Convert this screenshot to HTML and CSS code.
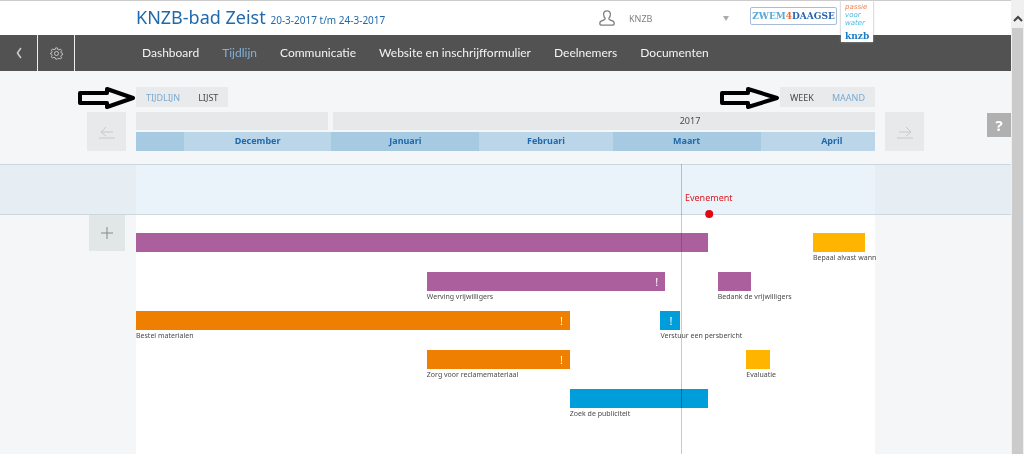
FILE: index.html
```html
<!DOCTYPE html>
<html lang="nl">
<head>
<meta charset="utf-8">
<title>KNZB-bad Zeist - Tijdlijn</title>
<link rel="stylesheet" href="styles.css">
</head>
<body>
<div class="window">
  <div class="app">
    <header class="header">
      <h1 class="title">KNZB-bad Zeist <small class="dates">20-3-2017 t/m 24-3-2017</small></h1>
      <div class="account">
        <svg class="user-icon" viewBox="0 0 16 16" aria-hidden="true"><path d="M8 .8c-2 0-3.400 1.400-3.400 3.500 0 1.700.6 3 1.500 4 .3 1-.1 1.400-1 1.700-2.500.6-4.300 1.500-4.300 3.200 0 1.300.8 2 2.200 2h10c1.400 0 2.200-.7 2.200-2 0-1.700-1.800-2.600-4.300-3.200-.9-.3-1.300-.7-1-1.700.9-1 1.500-2.300 1.500-4C11.400 2.200 10 .8 8 .8z"/></svg>
        <select class="account-select" aria-label="Account"><option>KNZB</option></select>
        <svg class="caret" viewBox="0 0 6 5" aria-hidden="true"><path d="M0 0h6L3 5z"/></svg>
      </div>
      <div class="brands">
        <a class="zwem" href="#"><span class="zwem-light">ZWEM</span><span class="zwem-four">4</span>DAAGSE</a>
        <a class="knzb" href="#"><span class="passie">passie</span><span class="voor">voor</span><span class="voor">water</span><b class="knzb-name">knzb</b></a>
      </div>
    </header>
    <nav class="nav">
      <div class="tools">
        <button class="tool" aria-label="Terug"><svg class="back-icon" viewBox="0 0 6 12"><path d="M5 1Q3 3.500 1.500 6 3 8.500 5 11"/></svg></button>
        <button class="tool" aria-label="Instellingen"><svg class="gear-icon" viewBox="0 0 14 14"><path d="M6 1h2l.4 1.700 1.300.5 1.500-.9 1.400 1.400-.9 1.500.5 1.300 1.300.3v1.600l-1.300.4-.5 1.300.9 1.500-1.400 1.400-1.500-.9-1.300.5L8 13H6l-.4-1.400-1.300-.5-1.500.9-1.400-1.400.9-1.500-.5-1.300L.5 7.400V6.600l1.300-.3.5-1.300-.9-1.500 1.400-1.400 1.500.9 1.300-.5z"/><circle cx="7" cy="7" r="2.200"/></svg></button>
      </div>
      <div class="menu">
        <a href="#">Dashboard</a>
        <a href="#" class="current">Tijdlijn</a>
        <a href="#">Communicatie</a>
        <a href="#">Website en inschrijfformulier</a>
        <a href="#">Deelnemers</a>
        <a href="#">Documenten</a>
      </div>
    </nav>
    <main class="main">
      <div class="switches">
        <div class="switch">
          <svg class="callout callout-view" viewBox="0 0 58 22" aria-hidden="true"><path d="M2 6h27V2l26 9-26 9v-4H2z"/></svg>
          <button class="active">TIJDLIJN</button><button>LIJST</button>
        </div>
        <div class="switch">
          <svg class="callout callout-scale" viewBox="0 0 62 22" aria-hidden="true"><path d="M4 6h26V2l29 9-29 9v-4H4z"/></svg>
          <button>WEEK</button><button class="active">MAAND</button>
        </div>
      </div>
      <div class="calendar">
        <button class="step step-back" aria-label="Vorige"><svg viewBox="0 0 18 14"><path d="M3 7h12M8 2L3 7l5 4M1 13h16"/></svg></button>
        <div class="scale">
          <div class="years"><div class="year year-previous"></div><div class="year year-current">2017</div></div>
          <div class="months days">
            <div class="month odd" style="grid-column: span 10"></div>
            <div class="month" style="grid-column: span 31">December</div>
            <div class="month odd" style="grid-column: span 31">Januari</div>
            <div class="month" style="grid-column: span 28">Februari</div>
            <div class="month odd" style="grid-column: span 31">Maart</div>
            <div class="month month-cut" style="grid-column: span 24">April</div>
          </div>
        </div>
        <button class="step" aria-label="Volgende"><svg viewBox="0 0 18 14"><path d="M3 7h12M10 2l5 5-5 4M1 13h16"/></svg></button>
        <button class="help" aria-label="Help">?</button>
      </div>
      <section class="board">
        <div class="event-band"><div class="event-lane"></div></div>
        <div class="plan">
          <div class="side"><button class="add" aria-label="Toevoegen"><svg viewBox="0 0 12 12"><path d="M6 0v12M0 6h12"/></svg></button></div>
          <div class="tasks days">
            <div class="task purple" style="grid-area: 1 / 1 / 2 / 121"><div class="bar"></div></div>
            <div class="task yellow" style="grid-area: 1 / 143 / 2 / 154"><div class="bar"></div><span>Bepaal alvast wann</span></div>
            <div class="task purple" style="grid-area: 2 / 62 / 3 / 112"><div class="bar">!</div><span>Werving vrijwilligers</span></div>
            <div class="task purple" style="grid-area: 2 / 123 / 3 / 130"><div class="bar"></div><span>Bedank de vrijwilligers</span></div>
            <div class="task orange" style="grid-area: 3 / 1 / 4 / 92"><div class="bar">!</div><span>Bestel materialen</span></div>
            <div class="task blue" style="grid-area: 3 / 111 / 4 / 115"><div class="bar">!</div><span>Verstuur een persbericht</span></div>
            <div class="task orange" style="grid-area: 4 / 62 / 5 / 92"><div class="bar">!</div><span>Zorg voor reclamemateriaal</span></div>
            <div class="task yellow" style="grid-area: 4 / 129 / 5 / 134"><div class="bar"></div><span>Evaluatie</span></div>
            <div class="task blue" style="grid-area: 5 / 92 / 6 / 121"><div class="bar"></div><span>Zoek de publiciteit</span></div>
          </div>
        </div>
        <div class="markers">
          <div class="today" style="left: 73.7%"></div>
          <div class="event" style="left: 77.5%">Evenement</div>
        </div>
      </section>
    </main>
  </div>
  <div class="scrollbar" aria-hidden="true">
    <div class="scroll-up"><svg viewBox="0 0 10 7"><path d="M1 6l4-4 4 4"/></svg></div>
    <div class="thumb"></div>
  </div>
</div>
</body>
</html>
```
FILE: styles.css
```css
* { box-sizing: border-box; }
body {
  margin: 0;
  font-family: "Noto Sans", sans-serif;
  font-size: 12px;
  color: #4a4a4a;
  background: #f5f6f8;
}
button, select { font: inherit; color: inherit; border: 0; margin: 0; padding: 0; background: none; }
a { color: inherit; text-decoration: none; }
svg { display: block; fill: none; stroke: currentColor; }

.window { display: flex; min-height: 100vh; }
.app { flex: 1; min-width: 0; display: flex; flex-direction: column; }

.header {
  position: relative;
  display: flex;
  align-items: center;
  height: 35px;
  padding: 0 136px;
  background: #fff;
  border-top: 1px solid #ccc;
}
.title { flex: 1; margin: 0; padding-bottom: 3px; font-size: 18px; font-weight: 400; color: #1f69ac; white-space: nowrap; }
.dates { font-size: 10px; }
.account { display: flex; align-items: center; width: 130px; margin-right: 21px; color: #808080; font-size: 9px; }
.user-icon { width: 16px; height: 16px; margin-right: 14px; stroke-width: 1.3; }
.account-select { flex: 1; appearance: none; }
.caret { width: 6px; height: 5px; fill: #aaa; stroke: none; }
.brands { display: flex; align-items: flex-start; align-self: flex-start; gap: 4px; height: 42px; margin-right: 2px; z-index: 1; }
.zwem {
  margin-top: 6px;
  width: 87px;
  border: 1px solid #a9bddb;
  border-radius: 2px;
  font: bold 9px/16px "DejaVu Serif", serif;
  text-align: center;
  color: #2a66b0;
}
.zwem-light { color: #5aaad8; }
.zwem-four { color: #ee6a33; }
.knzb {
  display: flex;
  flex-direction: column;
  width: 32px;
  height: 41px;
  padding-left: 4px;
  background: #fff;
  box-shadow: 0 0 2px #999;
  clip-path: inset(0 -3px -3px -3px);
  font: italic 7px/8px "DejaVu Sans", sans-serif;
}
.passie { padding-top: 2px; color: #f08050; }
.voor { color: #4bb8e4; }
.knzb-name { margin-top: 4px; font: bold 9px/10px "DejaVu Serif", serif; color: #1c7dc4; }

.nav { display: grid; grid-template-columns: 136px 1fr; height: 36px; background: #525252; color: #f4f4f4; }
.tools { display: flex; }
.tool { display: flex; align-items: center; justify-content: center; width: 38px; border-right: 1px solid #eee; color: #ccc; }
.tool + .tool { width: 37px; }
.back-icon { width: 6px; height: 12px; stroke-width: 1.5; }
.gear-icon { width: 13px; height: 13px; }
.menu { display: flex; align-items: center; gap: 23px; padding: 0 0 2px 6px; font-family: Lato, sans-serif; font-size: 12px; white-space: nowrap; }
.current { color: #80b1da; }

.main { flex: 1; display: flex; flex-direction: column; padding-top: 16px; }
.switches { display: flex; justify-content: space-between; padding: 0 136px; }
.switch { position: relative; display: flex; gap: 18px; height: 20px; padding: 0 10px; background: #e9eaec; font-size: 9px; }
.switch .active { color: #79a9d2; }
.callout { position: absolute; top: 0; height: 22px; color: #000; stroke-width: 4; stroke-linejoin: round; }
.callout-view { width: 58px; right: 100%; }
.callout-scale { width: 62px; right: 100%; }

.calendar { position: relative; display: grid; grid-template-columns: 136px 1fr 136px; margin-top: 5px; align-items: start; }
.step { display: flex; align-items: center; justify-content: center; width: 39px; height: 39px; margin-left: 10px; background: #e8e9eb; color: #c6c8ca; }
.step-back { justify-self: end; margin: 0 10px 0 0; }
.step svg { width: 18px; height: 14px; }
.scale { display: grid; gap: 2px; }
.years { display: grid; grid-template-columns: 192fr 542fr; gap: 5px; }
.year { height: 18px; background: #e7e8ea; font-size: 9px; line-height: 18px; text-align: center; }
.year-current { padding-left: 172px; }
.days { display: grid; grid-template-columns: repeat(155, minmax(0, 1fr)); }
.month { height: 19px; background: #bbd6e8; color: #1f69ac; font-size: 9px; line-height: 18px; font-weight: 700; text-align: center; }
.odd { background: #a6cae1; }
.month-cut { padding-left: 28px; }
.help { position: absolute; right: 0; top: 1px; width: 24px; height: 24px; background: #b0b0b0; color: #fff; font-size: 15px; font-weight: 700; line-height: 20px; }

.board { position: relative; flex: 1; display: flex; flex-direction: column; margin-top: 13px; }
.event-band { height: 51px; padding: 0 136px; background: #e6edf3; border: solid #cbd8df; border-width: 1px 0; }
.event-lane { height: 100%; background: #ebf3fa; }
.plan { flex: 1; display: grid; grid-template-columns: 136px 1fr 136px; }
.side { display: flex; justify-content: flex-end; align-items: flex-start; padding-right: 11px; }
.add { display: flex; align-items: center; justify-content: center; width: 36px; height: 36px; background: #e1e6e7; color: #888; }
.add svg { width: 12px; height: 12px; }
.tasks { grid-auto-rows: 39px; align-content: start; padding-top: 18px; background: #fff; }
.task { font-size: 7px; line-height: 12px; white-space: nowrap; }
.bar { height: 19px; padding: 0 7px; background: var(--tone); color: #fff; font-size: 11px; line-height: 19px; text-align: right; }
.purple { --tone: #ac5f9d; }
.orange { --tone: #ee7f00; }
.blue { --tone: #009ddb; }
.yellow { --tone: #ffb400; }

.markers { position: absolute; inset: 0 136px; pointer-events: none; }
.today { position: absolute; top: 0; bottom: 0; width: 1px; background: #fbb4ae; mix-blend-mode: multiply; }
.event { position: absolute; top: 28px; transform: translateX(-50%); color: #d71920; font-size: 9px; line-height: 12px; }
.event::after { content: ""; display: block; width: 8px; height: 8px; margin: 6px auto 0; border-radius: 50%; background: #e30613; }

.scrollbar { display: flex; flex-direction: column; width: 13px; padding: 0 1px; background: #f0f0f0; }
.scroll-up { display: flex; align-items: center; justify-content: center; height: 28px; padding-top: 8px; color: #444; }
.scroll-up svg { width: 10px; height: 7px; stroke-width: 2; }
.thumb { flex: 1; background: #cbcbcb; }
```
